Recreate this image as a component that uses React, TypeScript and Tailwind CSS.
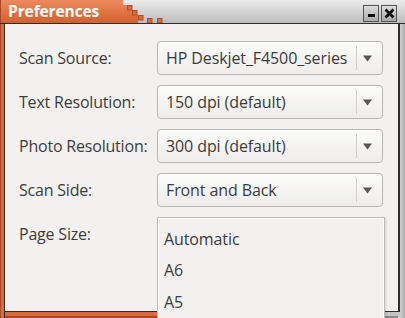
import React from "react";

const font = { fontFamily: '"Open Sans", "DejaVu Sans", sans-serif' };

function Arrow() {
  return (
    <svg width="11" height="7" viewBox="0 0 11 7">
      <path d="M1 0.5 L10 0.5 L5.5 6.5 Z" fill="#555555" />
    </svg>
  );
}

function Combo({ text }: { text: string }) {
  return (
    <div className="h-[34px] w-[226px] rounded-[4px] border border-[#b8b6b2] bg-[linear-gradient(#fbfbfa,#eeedeb)] flex items-center shadow-[inset_0_1px_0_#ffffff]">
      <div className="flex-1 pl-[8px] text-[16px] tracking-[-0.1px] text-[#3c3c3c] whitespace-nowrap overflow-hidden">{text}</div>
      <div className="w-px h-[24px] bg-[#cfcdc9]" />
      <div className="w-[25px] flex justify-center items-center">
        <div className="mr-[4px] flex"><Arrow /></div>
      </div>
    </div>
  );
}

function Squares() {
  const o = "#dc6a3a";
  const s = "#a9502a";
  const sq: [number, number][] = [
    [9, 5],
    [14, 10],
    [20, 15],
    [29, 18],
    [39, 18],
  ];
  return (
    <svg className="absolute left-[118px] top-0" width="50" height="23" viewBox="0 0 50 23">
      {sq.map(([x, y], i) => (
        <rect key={i} x={x + 0.5} y={y + 0.5} width="4.5" height="4.5" fill={o} stroke={s} strokeWidth="1" />
      ))}
    </svg>
  );
}

export default function App() {
  const rows = ["Scan Source:", "Text Resolution:", "Photo Resolution:", "Scan Side:", "Page Size:"];
  const vals = ["HP Deskjet_F4500_series", "150 dpi (default)", "300 dpi (default)", "Front and Back", ""];
  return (
    <div className="relative w-[405px] h-[318px] overflow-hidden bg-[#c8c8c8]" style={font}>
      {/* title bar */}
      <div className="relative h-[24px] flex border-b border-[#2e2e2e] bg-[linear-gradient(#ececec,#bcbcbc)]">
        <div className="w-[118px] h-full bg-[linear-gradient(#ec8a5e,#d4602e)] border-l border-[#a84a28] flex items-center pl-[7px]">
          <span className="text-white font-bold text-[15.5px] leading-none tracking-[-0.1px]">Preferences</span>
        </div>
        <div className="absolute left-[118px] top-0 w-[22px] h-[23px] bg-[linear-gradient(#ec8a5e,#d4602e)] [clip-path:polygon(0_0,5px_0,5px_5px,10px_5px,10px_10px,15px_10px,15px_15px,20px_15px,20px_23px,0_23px)]" />
        <Squares />
        <div className="flex-1" />
        <div className="flex gap-[2px] items-start pt-[5px] pr-[8px]">
          <div className="w-[16px] h-[17px] border border-[#555] bg-[linear-gradient(#dcdcdc,#a9a9a9)] flex items-end justify-center pb-[4px]">
            <div className="w-[7px] h-[3px] bg-black" />
          </div>
          <div className="w-[16px] h-[17px] border border-[#555] bg-[linear-gradient(#dcdcdc,#a9a9a9)] flex items-center justify-center">
            <svg width="11" height="11" viewBox="0 0 11 11">
              <path d="M1.5 1.5 L9.5 9.5 M9.5 1.5 L1.5 9.5" stroke="#000" strokeWidth="2.6" />
            </svg>
          </div>
        </div>
      </div>
      {/* body */}
      <div className="flex h-[294px]">
        <div className="w-[5px] flex">
          <div className="w-px bg-[#a84a28]" />
          <div className="w-[3px] bg-[#d96a3c]" />
          <div className="w-px bg-[#2e2e2e]" />
        </div>
        <div className="flex flex-col w-[393px]">
          <div className="h-[287px] bg-[#f2f1f0] pt-[17px] pl-[14px]">
            <div className="grid grid-cols-[138px_226px] gap-y-[10px] items-center">
              {rows.map((r, i) => (
                <React.Fragment key={r}>
                  <div className="text-[16px] tracking-[-0.2px] text-[#3c3c3c] whitespace-nowrap">{r}</div>
                  <Combo text={vals[i]} />
                </React.Fragment>
              ))}
            </div>
          </div>
          <div className="h-px bg-[#2e2e2e]" />
          <div className="h-[4px] bg-[linear-gradient(90deg,#d96a3c_0%,#d96a3c_50%,#c4c4c4_60%,#c4c4c4_100%)]" />
          <div className="h-[2px] bg-[linear-gradient(90deg,#a84a28_0%,#a84a28_50%,#8a8a8a_60%,#8a8a8a_100%)]" />
        </div>
        <div className="w-[2px] h-[288px] bg-[#2e2e2e]" />
        <div className="flex-1 bg-[linear-gradient(90deg,#d2d2d2,#a8a8a8)]" />
      </div>
      {/* dropdown menu */}
      <div className="absolute left-[157px] top-[217px] w-[228px] h-[110px] bg-[#f2f1f0] border border-[#bdbbb7] shadow-[inset_0_0_0_1px_#ffffff,1px_1px_2px_rgba(0,0,0,0.15)] pt-[5px]">
        {["Automatic", "A6", "A5"].map((t) => (
          <div key={t} className="h-[31.5px] flex items-center pl-[6px] text-[16px] tracking-[-0.1px] text-[#3c3c3c]">
            {t}
          </div>
        ))}
      </div>
    </div>
  );
}
